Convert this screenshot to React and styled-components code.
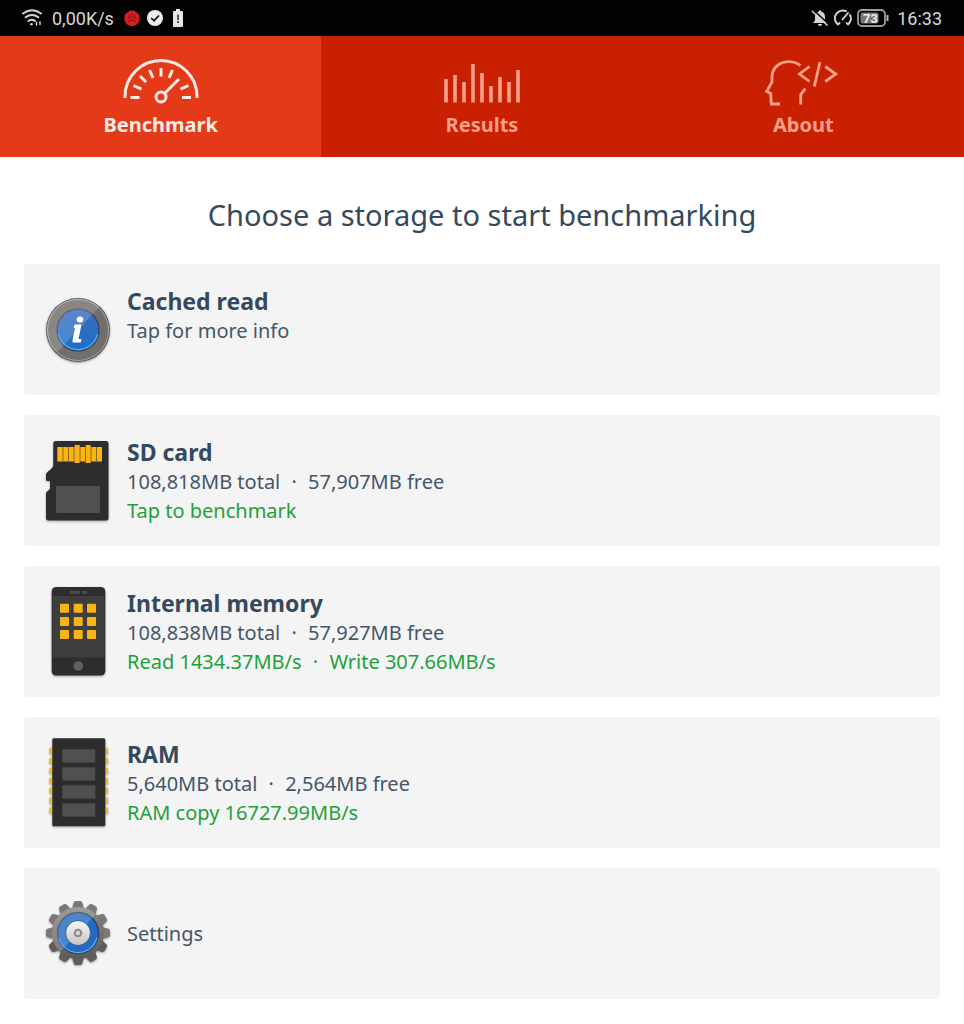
import React from 'react';
import styled, { createGlobalStyle } from 'styled-components';

const GlobalStyle = createGlobalStyle`
  *, *::before, *::after { box-sizing: border-box; }
  body {
    margin: 0;
    background: #fff;
    color: #34495e;
    font-family: "Noto Sans", "Open Sans", sans-serif;
  }
  button { font: inherit; color: inherit; border: 0; cursor: pointer; }
`;

const Page = styled.div`
  display: flex;
  flex-direction: column;
  min-height: 100vh;
`;

const StatusBar = styled.header`
  display: flex;
  align-items: center;
  justify-content: space-between;
  height: 36px;
  padding: 0 22px;
  background: #030303;
  color: #d6d6d6;
  font-family: Roboto, sans-serif;
  font-size: 18px;
`;

const StatusGroup = styled.div`
  display: flex;
  align-items: center;
  gap: ${(p) => p.$gap}px;
`;

const Tabs = styled.nav`
  display: grid;
  grid-template-columns: repeat(3, 1fr);
  background: #c82000;
`;

const Tab = styled.button`
  display: flex;
  flex-direction: column;
  align-items: center;
  gap: 5px;
  padding: 22px 0 18px;
  background: ${(p) => (p.$active ? '#e53a1a' : '#c82000')};
  color: ${(p) => (p.$active ? '#ffece6' : '#ff9f8c')};
`;

const TabLabel = styled.span`
  font-size: 20px;
  font-weight: 700;
  line-height: 28px;
`;

const Main = styled.main`
  padding: 36px 24px 26px;
`;

const Heading = styled.h1`
  margin: 0 0 27px;
  font-size: 29px;
  font-weight: 400;
  line-height: 44px;
  text-align: center;
`;

const CardList = styled.div`
  display: flex;
  flex-direction: column;
  gap: 20px;
`;

const Card = styled.button`
  display: flex;
  align-items: center;
  gap: 15px;
  width: 100%;
  min-height: 131px;
  padding: 0 20px;
  border-radius: 4px;
  background: #f4f4f4;
  text-align: left;
`;

const CardText = styled.span`
  display: flex;
  flex-direction: column;
  min-height: ${(p) => (p.$single ? 0 : 88)}px;
`;

const CardTitle = styled.span`
  font-size: 23px;
  font-weight: 700;
  line-height: 30px;
`;

const CardLine = styled.span`
  color: ${(p) => (p.$accent ? '#1fa03c' : '#44566a')};
  font-size: 20px;
  line-height: 29px;
`;

const Dot = styled.span`
  margin: 0 6px;
`;

function WifiIcon() {
  return (
    <svg width="20" height="20" viewBox="1 0 20 20" fill="none" stroke="currentColor" strokeWidth="2" strokeLinecap="round">
      <path d="M2 5.500Q11 -.8 20 5.500M4.700 9.300Q11 4.800 17.300 9.300M7.500 13Q11 10.600 14 13" />
      <circle cx="10.500" cy="16.300" r="1.300" fill="currentColor" stroke="none" />
      <path d="M15.500 14.500v2.500M19 14v2.500" strokeWidth="1.500" />
    </svg>
  );
}

function AntutuIcon() {
  return (
    <svg width="16" height="18" viewBox="0 0 16 18">
      <path d="M8 2C10 1 11 2 11.500 3C14.500 4 16 7 15.500 10.500C15 14.500 12 17 8 17S1 14.500 .5 10.500C0 7 1.500 4 4.500 3C5 2 6 1 8 2Z" fill="#d3201f" />
      <path d="M5 5.500L6 9.500L4 8M11 5.500L10 9.500L12 8M8 4v5M4 12.500Q8 9.500 12 12.500" fill="none" stroke="#8d0f0f" strokeWidth="1" />
    </svg>
  );
}

function CheckIcon() {
  return (
    <svg width="16" height="16" viewBox="0 0 16 16">
      <circle cx="8" cy="8" r="8" fill="#ececec" />
      <path d="M4.200 8L7 10.700L12 5.500" fill="none" stroke="#111" strokeWidth="1.700" />
    </svg>
  );
}

function SmallBatteryIcon() {
  return (
    <svg width="10" height="18" viewBox="0 0 10 18">
      <path d="M3 0h4v2h2q1 0 1 1v14q0 1-1 1H1q-1 0-1-1V3q0-1 1-1h2z" fill="#e6e6e6" />
      <path d="M5 5.500v5.500M5 12v2" stroke="#333" strokeWidth="1.600" />
    </svg>
  );
}

function BellOffIcon() {
  return (
    <svg width="18" height="18" viewBox="0 0 18 18">
      <path d="M9 1.200q1 0 1.200 1.300Q14 3.500 14 8v3.500l2 2.500H2l2-2.500V8Q4 3.500 7.800 2.500Q8 1.200 9 1.200zM7 15h4q0 2-2 2t-2-2z" fill="currentColor" />
      <path d="M2 .5L18 15.500" stroke="#030303" strokeWidth="1.500" />
      <path d="M1 2L16.500 16.500" stroke="currentColor" strokeWidth="1.600" />
    </svg>
  );
}

function SpeedIcon() {
  return (
    <svg width="20" height="18" viewBox="0 0 20 18" fill="none" stroke="currentColor" strokeWidth="1.900" strokeLinecap="round">
      <path d="M5 15.500A7.800 7.800 0 0 1 13 2.200M17 6A7.800 7.800 0 0 1 15 15.500M5 15.500L6.500 14M15 15.500L13.700 14M9.500 10.500L15 4" />
    </svg>
  );
}

function BatteryIcon() {
  return (
    <svg width="32" height="18" viewBox="0 0 32 18">
      <rect x="1" y="1" width="27" height="16" rx="4" fill="none" stroke="#9c9c9c" strokeWidth="1.800" />
      <rect x="3.500" y="3.500" width="18" height="11" rx="2" fill="#777" />
      <path d="M30.500 6v6" stroke="#b5b5b5" strokeWidth="2" />
      <text x="13.500" y="13.500" textAnchor="middle" fill="#eee" fontFamily="Roboto, sans-serif" fontSize="13" fontWeight="700">73</text>
    </svg>
  );
}

const tabIconProps = {
  width: 80,
  height: 48,
  viewBox: '0 0 80 48',
  fill: 'none',
  stroke: 'currentColor',
  strokeWidth: 3,
};

function GaugeIcon() {
  return (
    <svg {...tabIconProps}>
      <path d="M4 40V38.500A36 36 0 0 1 76 38.500V40" />
      <circle cx="40" cy="39" r="5" />
      <path d="M44 35L58 21M9.500 39.500H18.500M61 39.500H70M12.500 27.500L20.500 31.200M59.500 31.200L67.500 27.500M19 18L25 24M28.500 12L32 20M40 10V18.500M51.500 12L48 20" />
    </svg>
  );
}

function BarsIcon() {
  const tops = [21, 17, 24, 6, 15, 28, 19, 24, 12];
  return (
    <svg {...tabIconProps} strokeWidth="3.600">
      {tops.map((y, i) => (
        <path key={i} d={`M${4 + i * 9} ${y}V44.500`} />
      ))}
    </svg>
  );
}

function AboutIcon() {
  return (
    <svg {...tabIconProps} strokeWidth="2.800">
      <path d="M37.500 7.500C31 2.500 22 2.500 16.500 6C11 9.500 9 14 9 19V24L3.700 33.500L7.700 35.500L8.300 46H17M42.300 30.500L37.700 36.700V46.500M46.500 8.500L36.500 16L46.500 23.500M57 4L51.300 28.500M62.300 8.500L72.700 16L62.300 23.500" />
    </svg>
  );
}

const Glyph = styled.svg`
  flex: none;
  width: 68px;
  height: 96px;
  filter: drop-shadow(0 1px 1px rgba(0, 0, 0, 0.35));
`;

function InfoIcon() {
  return (
    <Glyph viewBox="0 0 68 96">
      <defs>
        <linearGradient id="infoBlue" x1="0" y1="0" x2="0" y2="1">
          <stop offset="0" stopColor="#3a6cc0" />
          <stop offset="1" stopColor="#1e6fc4" />
        </linearGradient>
        <clipPath id="infoClip"><circle cx="34" cy="48" r="31.500" /></clipPath>
      </defs>
      <circle cx="34" cy="48" r="32" fill="#5a5959" />
      <circle cx="34" cy="48" r="30.500" fill="#716e6c" stroke="#aaa8a6" />
      <circle cx="34" cy="48" r="21" fill="url(#infoBlue)" stroke="#343f50" strokeWidth="1.200" />
      <path d="M13.500 70L57 23L40 10L0 30V62Z" fill="#fff" opacity=".17" clipPath="url(#infoClip)" />
      <path d="M14.500 52A20 20 0 0 0 53.500 52" fill="none" stroke="#57aef0" strokeWidth="1.200" />
      <ellipse cx="36" cy="37.500" rx="3.300" ry="3" fill="#fff" />
      <path d="M30.500 42.500H37.500L34.500 57H37.500L36.800 60.500H29.500Q28 60.500 28.500 58L31 46H29.800Z" fill="#fff" />
    </Glyph>
  );
}

function SdCardIcon() {
  return (
    <Glyph viewBox="0 0 68 96">
      <path d="M12 8H62Q64.500 8 64.500 10.500V85Q64.500 87.500 62 87.500H4.500Q2 87.500 2 85V60.500Q2 59 3.500 58L5 57Q6 56 6 54.500V48H3.500Q2 48 2 46.500V41.500Q2 40 3.500 39L7 36Q9.300 34.500 9.300 32V10.500Q9.300 8 12 8Z" fill="#2d2d2d" />
      <path d="M13.300 14H30.700V12H35.700V14H41.700V12H46.700V14H58V28.500H46.700V30H41.700V28.500H35.700V30H30.700V28.500H13.300Z" fill="#fab515" />
      <path d="M19 14V28.500M24.500 14V28.500M30 14V28.500M36 14V28.500M41.500 14V28.500M47 14V28.500M52.500 14V28.500" stroke="#8c6a1c" />
      <rect x="12" y="53" width="44" height="27" rx="1" fill="#505050" />
    </Glyph>
  );
}

function PhoneIcon() {
  const cols = [16, 29.7, 43];
  const rows = [19.7, 33, 46];
  return (
    <Glyph viewBox="0 0 68 96">
      <rect x="7.700" y="3" width="53.600" height="88.500" rx="4.500" fill="#2d2d2d" />
      <rect x="8.700" y="12" width="51.600" height="61.500" fill="#3e3e3e" />
      <path d="M26 8.300H36M38 8.300H43" stroke="#4c4c4c" strokeWidth="3" />
      {rows.map((y) => cols.map((x) => (
        <rect key={`${x}-${y}`} x={x} y={y} width="9" height="9" rx="1" fill="#fbb416" />
      )))}
      <circle cx="34.300" cy="82" r="4.800" fill="#606060" />
    </Glyph>
  );
}

function RamIcon() {
  return (
    <Glyph viewBox="0 0 68 96">
      {[0, 1, 2, 3, 4, 5, 6].map((i) => (
        <rect key={i} x="5.500" y={12.7 + i * 9.9} width="58.500" height="6.500" rx="1.500" fill="#e8b92c" />
      ))}
      <rect x="8.300" y="3.300" width="53" height="88" rx="1.500" fill="#2c2c2c" />
      {[0, 1, 2, 3].map((i) => (
        <rect key={i} x="18.300" y={14.3 + i * 18} width="33" height="13.300" fill="#505050" />
      ))}
    </Glyph>
  );
}

function GearIcon() {
  return (
    <Glyph viewBox="0 0 68 96">
      <defs>
        <linearGradient id="gearMetal" x1="0" y1="0" x2="0" y2="1">
          <stop offset="0" stopColor="#8a8785" />
          <stop offset="1" stopColor="#5c5a59" />
        </linearGradient>
        <linearGradient id="gearDisc" x1="0" y1="0" x2="0" y2="1">
          <stop offset="0" stopColor="#f8f8f8" />
          <stop offset="1" stopColor="#c4c4c4" />
        </linearGradient>
        <clipPath id="gearClip"><circle cx="34" cy="47" r="26" /></clipPath>
      </defs>
      {[0, 1, 2, 3, 4, 5, 6, 7, 8, 9, 10, 11].map((i) => (
        <path key={i} d="M28 23L29.800 16.500Q30.300 15 31.800 15H36.200Q37.700 15 38.200 16.500L40 23Z" fill={i > 3 && i < 9 ? '#605e5d' : '#7b7876'} transform={`rotate(${i * 30} 34 47)`} />
      ))}
      <circle cx="34" cy="47" r="26" fill="url(#gearMetal)" />
      <circle cx="34" cy="47" r="20.500" fill="#216cc3" stroke="#30435f" strokeWidth="1.500" />
      <path d="M16 66L52 28L38 16L0 28V60Z" fill="#fff" opacity=".18" clipPath="url(#gearClip)" />
      <path d="M15 51.500A19.500 19.500 0 0 0 53 51.500" fill="none" stroke="#55acef" strokeWidth="1.200" />
      <circle cx="34" cy="47" r="12.500" fill="url(#gearDisc)" stroke="#315f9b" strokeWidth="1" />
      <circle cx="34" cy="47" r="3.300" fill="#d5d5d5" stroke="#8b8b8b" strokeWidth="2" />
    </Glyph>
  );
}

const tabs = [
  { label: 'Benchmark', Icon: GaugeIcon, active: true },
  { label: 'Results', Icon: BarsIcon },
  { label: 'About', Icon: AboutIcon },
];

const cards = [
  { title: 'Cached read', line: ['Tap for more info'], Icon: InfoIcon },
  { title: 'SD card', line: ['108,818MB total', '57,907MB free'], accent: ['Tap to benchmark'], Icon: SdCardIcon },
  { title: 'Internal memory', line: ['108,838MB total', '57,927MB free'], accent: ['Read 1434.37MB/s', 'Write 307.66MB/s'], Icon: PhoneIcon },
  { title: 'RAM', line: ['5,640MB total', '2,564MB free'], accent: ['RAM copy 16727.99MB/s'], Icon: RamIcon },
  { line: ['Settings'], Icon: GearIcon },
];

function Facts({ parts, accent }) {
  return (
    <CardLine $accent={accent}>
      {parts.map((part, i) => (
        <React.Fragment key={part}>
          {i > 0 && <> <Dot>·</Dot> </>}
          {part}
        </React.Fragment>
      ))}
    </CardLine>
  );
}

export default function App() {
  return (
    <Page>
      <GlobalStyle />
      <StatusBar>
        <StatusGroup $gap={10}>
          <WifiIcon />
          <span>0,00K/s</span>
          <StatusGroup $gap={7}>
            <AntutuIcon />
            <CheckIcon />
          </StatusGroup>
          <SmallBatteryIcon />
        </StatusGroup>
        <StatusGroup $gap={8}>
          <StatusGroup $gap={4}>
            <BellOffIcon />
            <SpeedIcon />
            <BatteryIcon />
          </StatusGroup>
          <span>16:33</span>
        </StatusGroup>
      </StatusBar>
      <Tabs>
        {tabs.map(({ label, Icon, active }) => (
          <Tab key={label} $active={active} aria-current={active ? 'page' : undefined}>
            <Icon />
            <TabLabel>{label}</TabLabel>
          </Tab>
        ))}
      </Tabs>
      <Main>
        <Heading>Choose a storage to start benchmarking</Heading>
        <CardList>
          {cards.map(({ title, line, accent, Icon }) => (
            <Card key={title || line[0]}>
              <Icon />
              <CardText $single={!title}>
                {title && <CardTitle>{title}</CardTitle>}
                <Facts parts={line} />
                {accent && <Facts parts={accent} accent />}
              </CardText>
            </Card>
          ))}
        </CardList>
      </Main>
    </Page>
  );
}
